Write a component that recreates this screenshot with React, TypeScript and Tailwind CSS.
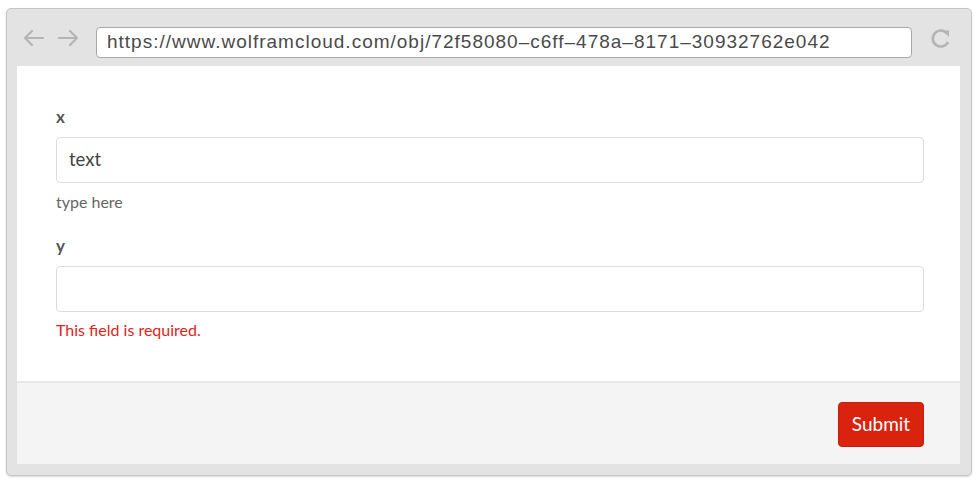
import React from "react";

export default function App() {
  return (
    <div className="w-[978px] h-[484px] bg-white pt-[8px] pl-[6px]" style={{ fontFamily: "Lato, 'Open Sans', sans-serif" }}>
      <div className="w-[966px] h-[468px] rounded-[5px] border border-[#c6c6c6] bg-[#e3e3e3] shadow-[0_1px_2px_rgba(0,0,0,0.15)] flex flex-col pl-[10px] pr-[11px] pb-[11px]">
        {/* toolbar */}
        <div className="h-[57px] flex items-center">
          <div className="flex items-center gap-[12px] ml-[5px] mt-[1px]">
            <svg width="23" height="18" viewBox="0 0 23 18" fill="none" stroke="#b4b4b4" strokeWidth="2.2" strokeLinecap="round" strokeLinejoin="round">
              <path d="M21 9H3M10 2L3 9l7 7" />
            </svg>
            <svg width="23" height="18" viewBox="0 0 23 18" fill="none" stroke="#b4b4b4" strokeWidth="2.2" strokeLinecap="round" strokeLinejoin="round">
              <path d="M2 9h18M13 2l7 7-7 7" />
            </svg>
          </div>
          <div className="ml-[16px] w-[816px] h-[31px] mt-[9px] rounded-[4px] border border-[#a9a9a9] bg-white flex items-center pl-[10px] text-[19px] text-[#4a4a4a] tracking-[1px] whitespace-nowrap overflow-hidden" style={{ fontFamily: "'Liberation Sans', Arial, sans-serif" }}>
            https://www.wolframcloud.com/obj/72f58080–c6ff–478a–8171–30932762e042
          </div>
          <svg className="ml-[18px] mt-[1px]" width="22" height="22" viewBox="0 0 22 22" fill="none" stroke="#b4b4b4" strokeWidth="2.6" strokeLinecap="butt">
            <path d="M17 6.5A8 8 0 1 0 18 15" />
            <path d="M12.5 3.5h6.5v6.5z" fill="#b4b4b4" stroke="none" />
          </svg>
        </div>
        {/* content */}
        <div className="flex-1 flex flex-col bg-white">
          <div className="h-[315px] pl-[39px] pr-[36px] pt-[41px] flex flex-col">
            <label className="text-[17px] font-bold text-[#555] leading-[20px]">x</label>
            <div className="mt-[10px] h-[46px] rounded-[4px] border border-[#dcdcdc] flex items-center pl-[12px] text-[18.5px] text-[#444]">
              text
            </div>
            <div className="mt-[9px] text-[16px] text-[#666] leading-[20px]">type here</div>
            <label className="mt-[24px] text-[17px] font-bold text-[#555] leading-[20px]">y</label>
            <div className="mt-[10px] h-[46px] rounded-[4px] border border-[#dcdcdc]" />
            <div className="mt-[8px] text-[16px] text-[#e0231b] leading-[20px]">This field is required.</div>
          </div>
          <div className="flex-1 bg-[#f4f4f4] border-t-[2px] border-[#e8e8e8] flex items-start justify-end pr-[36px] pt-[19px]">
            <button className="w-[86px] h-[45px] rounded-[4px] bg-[#d9230f] text-white text-[19px] border border-[#c41e0c]">
              Submit
            </button>
          </div>
        </div>
      </div>
    </div>
  );
}
